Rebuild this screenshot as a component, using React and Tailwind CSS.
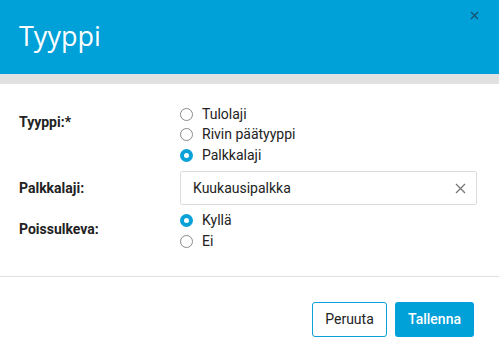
import React from "react";

function Radio({ label, checked }) {
  return (
    <label className="flex h-[20.5px] items-center gap-[9px]">
      {checked ? (
        <span className="flex h-[13px] w-[13px] items-center justify-center rounded-full bg-[#0aa0d8]">
          <span className="h-[5px] w-[5px] rounded-full bg-white" />
        </span>
      ) : (
        <span className="h-[13px] w-[13px] rounded-full border border-[#8a8a8a] bg-white" />
      )}
      <span>{label}</span>
    </label>
  );
}

export default function App() {
  return (
    <div className="h-[359px] w-[499px] overflow-hidden bg-white font-['Roboto',sans-serif] text-[14px] text-[#222]">
      {/* Header */}
      <div className="relative flex h-[74px] items-center bg-[#00a0d8] pb-[4px] pl-[19px]">
        <h1 className="font-['Open_Sans',sans-serif] text-[27px] font-medium leading-none text-white">Tyyppi</h1>
        <button className="absolute right-[20px] top-[11px] text-[#1d4e6b]">
          <svg width="9" height="9" viewBox="0 0 9 9" stroke="currentColor" strokeWidth="1.2">
            <path d="M1 1l7 7M8 1l-7 7" />
          </svg>
        </button>
      </div>
      <div className="h-[10px] bg-[#e1e1e1]" />

      {/* Form */}
      <div className="grid grid-cols-[161px_1fr] gap-y-[5.5px] pb-[24px] pl-[19px] pr-[22px] pt-[20px]">
        <div className="pt-[8px] font-bold leading-5">Tyyppi:*</div>
        <div className="flex flex-col">
          <Radio label="Tulolaji" />
          <Radio label="Rivin päätyyppi" />
          <Radio label="Palkkalaji" checked />
        </div>

        <div className="flex items-center font-bold">Palkkalaji:</div>
        <div className="flex h-[34px] items-center justify-between rounded-[2px] border border-[#dcdcdc] pl-[12px] pr-[10px]">
          <span>Kuukausipalkka</span>
          <svg width="11" height="11" viewBox="0 0 11 11" stroke="#777" strokeWidth="1.3">
            <path d="M1 1l9 9M10 1l-9 9" />
          </svg>
        </div>

        <div className="pt-[8px] font-bold leading-5">Poissulkeva:</div>
        <div className="flex flex-col">
          <Radio label="Kyllä" checked />
          <Radio label="Ei" />
        </div>
      </div>

      <div className="h-px bg-[#dde1e6]" />

      {/* Footer */}
      <div className="flex justify-end gap-[8px] pr-[25px] pt-[25px]">
        <button className="h-[35px] w-[75px] rounded-[3px] border border-[#0aa0d8] bg-white text-[#222]">Peruuta</button>
        <button className="h-[35px] w-[79px] rounded-[3px] bg-[#00a0d8] font-medium text-white">Tallenna</button>
      </div>
    </div>
  );
}
